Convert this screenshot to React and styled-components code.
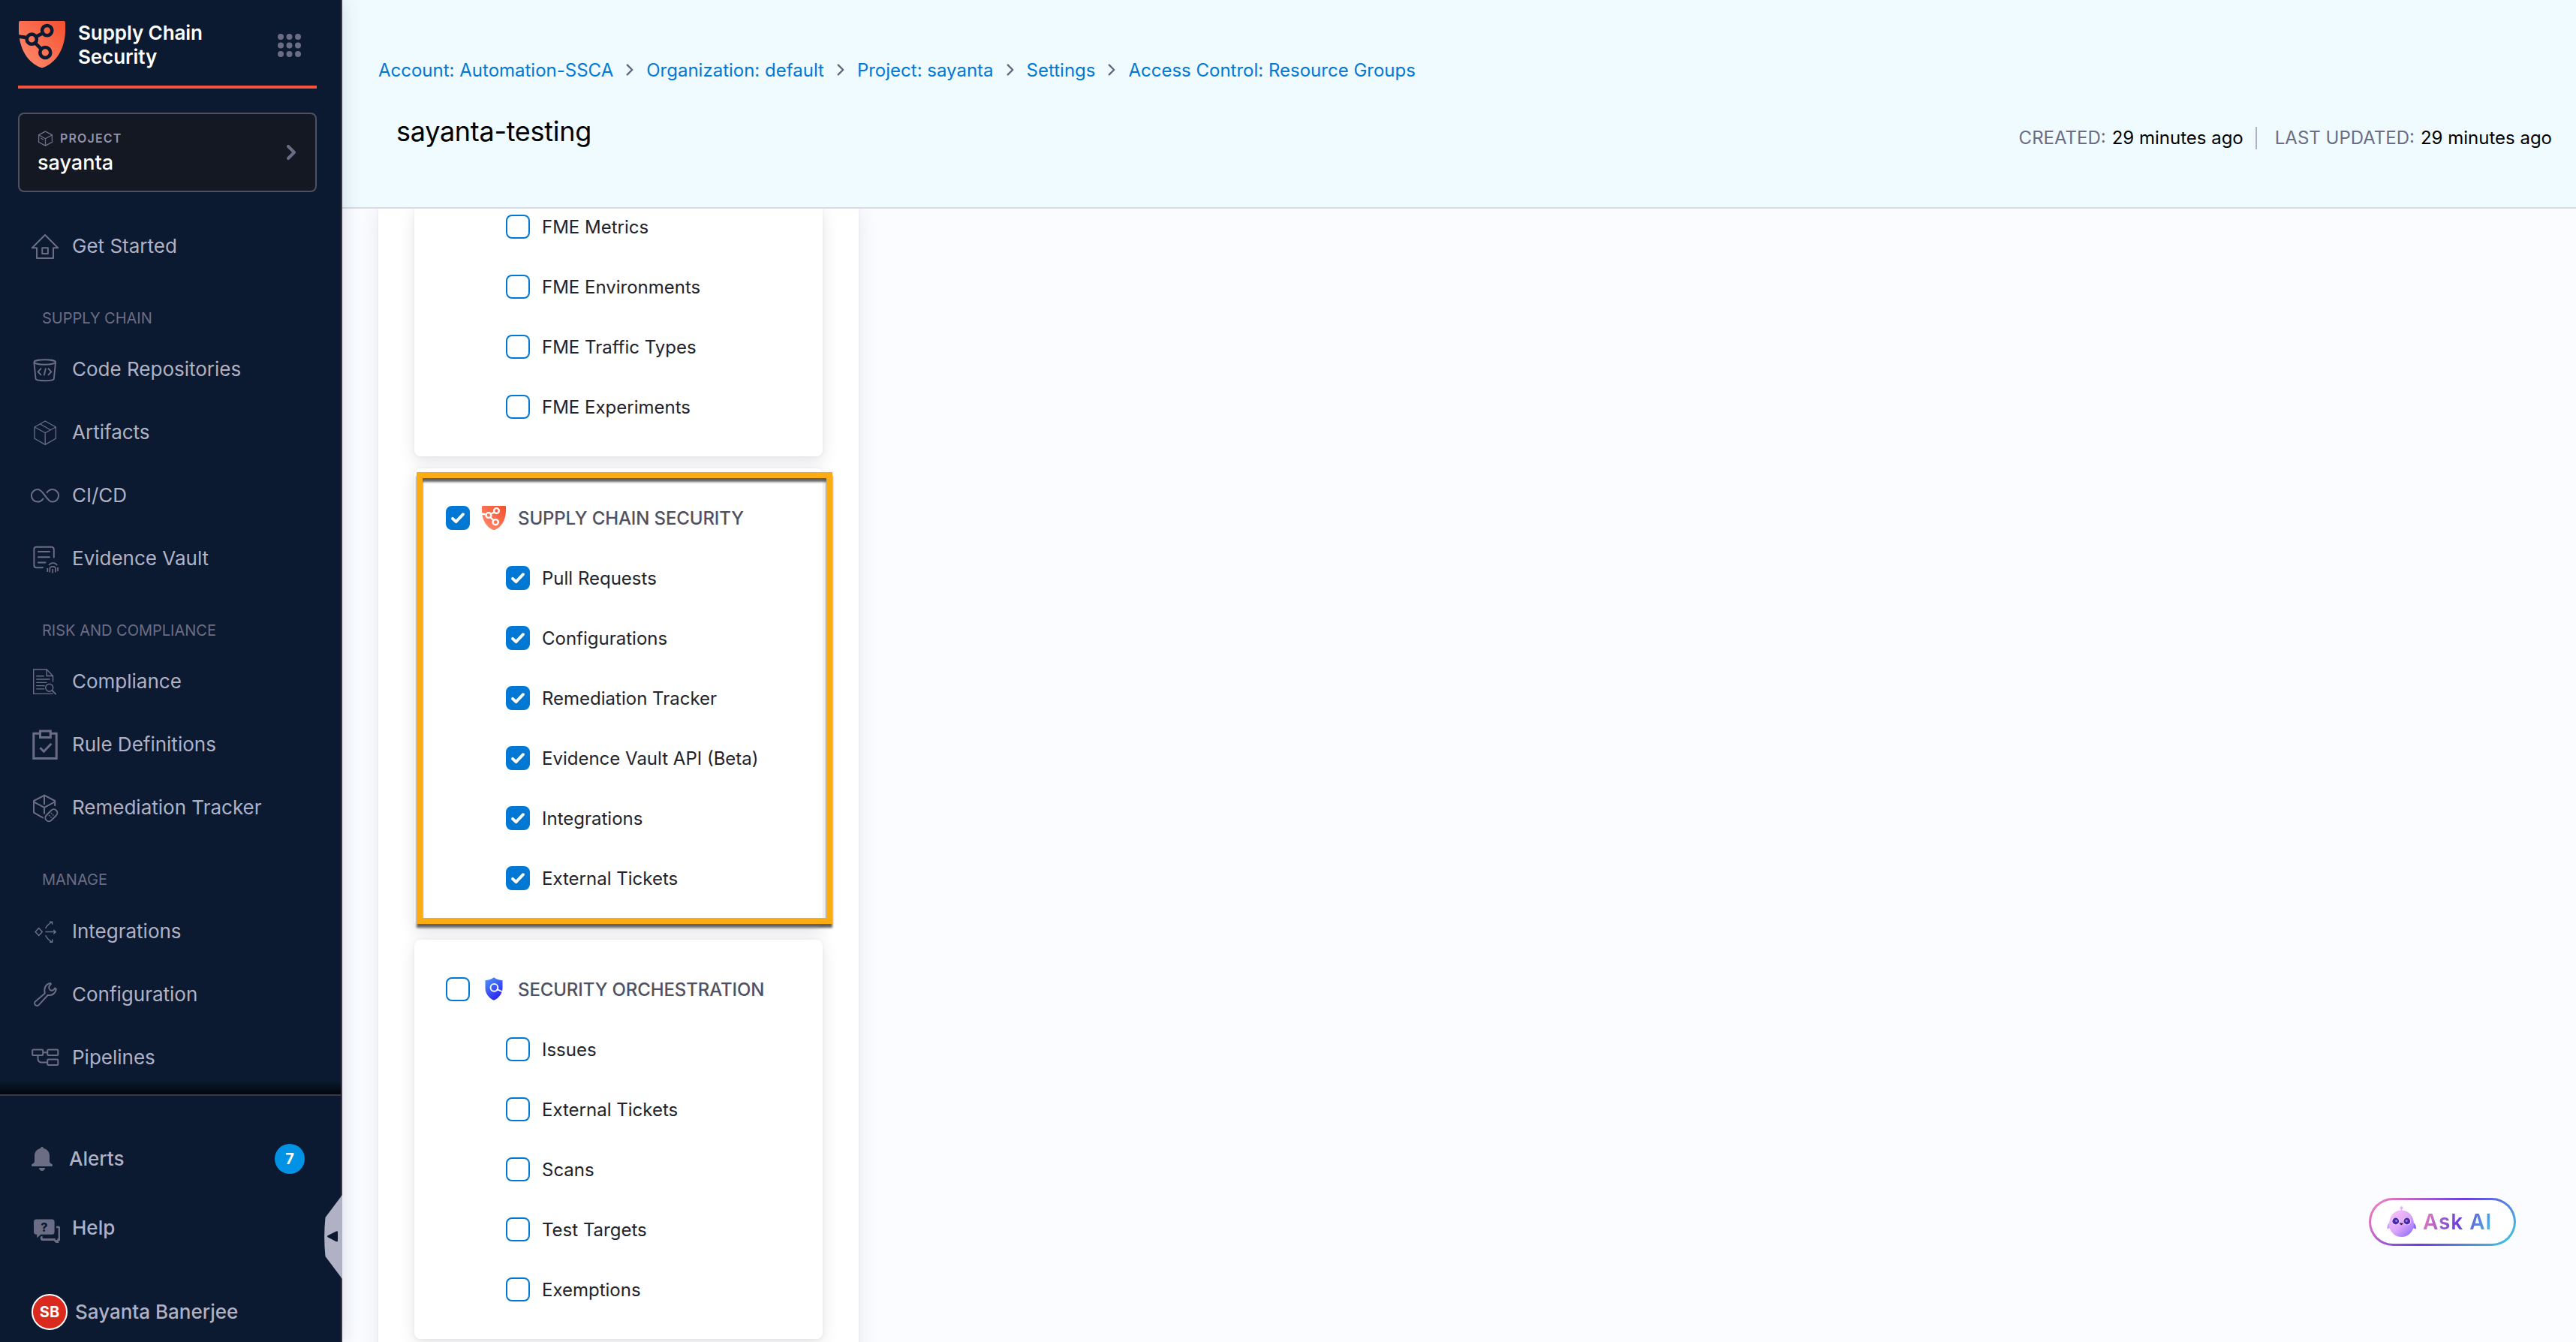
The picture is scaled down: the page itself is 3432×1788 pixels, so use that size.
import React from "react";
import styled, { createGlobalStyle, css } from "styled-components";

const navy = "#0b1a30";
const muted = "#6b6d85";
const soft = "#b0b1c4";
const blue = "#0278d5";

const GlobalStyle = createGlobalStyle`
  *, *::before, *::after { box-sizing: border-box; }
  html, body { margin: 0; padding: 0; }
  body {
    font-family: Inter, "Liberation Sans", sans-serif;
    font-size: 24px;
    background: #fafcff;
    overflow: hidden;
  }
  svg { display: block; flex: none; }
`;

const Shell = styled.div`
  display: grid;
  grid-template-columns: 456px 1fr;
  width: 100vw;
  height: 100vh;
  overflow: hidden;
`;

/* ---------- sidebar ---------- */

const Sidebar = styled.aside`
  position: relative;
  z-index: 2;
  display: flex;
  flex-direction: column;
  height: 100vh;
  background: ${navy};
  border-right: 2px solid #383946;
  box-shadow: 0 0 24px rgba(40, 50, 80, 0.16);
`;

const Brand = styled.header`
  display: flex;
  align-items: flex-start;
  height: 118px;
  margin: 0 32px 0 24px;
  padding: 28px 21px 0 1px;
  border-bottom: 4px solid #f7533a;
`;

const BrandName = styled.h1`
  flex: 1;
  width: 180px;
  margin: 0 0 0 17px;
  font-size: 26px;
  line-height: 32px;
  font-weight: 600;
  letter-spacing: -0.08px;
  color: #fff;
`;

const AppGrid = styled.svg`
  margin-top: 17px;
  fill: ${muted};
`;

const ProjectBox = styled.section`
  display: flex;
  align-items: center;
  justify-content: space-between;
  height: 106px;
  margin: 32px 32px 0 24px;
  padding: 0 26px 0 24px;
  background: #141822;
  border: 2px solid #4f5162;
  border-radius: 8px;
`;

const ProjectInfo = styled.div`
  display: flex;
  flex-direction: column;
  gap: 4px;
  padding-bottom: 2px;
`;

const ProjectTag = styled.div`
  display: flex;
  align-items: center;
  gap: 9px;
  height: 26px;
  font-size: 16px;
  font-weight: 600;
  letter-spacing: 1.15px;
  color: #9293ab;
`;

const ProjectName = styled.div`
  font-size: 27px;
  line-height: 32px;
  font-weight: 500;
  color: #fff;
`;

const Nav = styled.nav`
  flex: 1;
  min-height: 0;
  padding-top: 30px;
  background: linear-gradient(to top, #02060e 0, rgba(11, 26, 48, 0) 18px);
`;

const NavItem = styled.a`
  display: flex;
  align-items: center;
  gap: 16px;
  height: 84px;
  padding-left: 40px;
  font-size: 26px;
  color: ${soft};
`;

const RowText = styled.span`
  margin-top: ${(p) => (p.$drop ? 1 : -1)}px;
`;

const NavLabel = styled.div`
  height: ${(p) => p.$height || 80}px;
  padding: 42px 0 0 56px;
  font-size: 20px;
  line-height: 24px;
  color: ${muted};
`;

const Footer = styled.div`
  height: 330px;
  padding-top: 38px;
  border-top: 2px solid #383946;
`;

const FooterItem = styled.a`
  display: flex;
  align-items: center;
  gap: ${(p) => p.$gap}px;
  height: 92px;
  padding: 0 48px 0 ${(p) => p.$indent}px;
  font-size: 26px;
  font-weight: 500;
  color: ${soft};
`;

const Badge = styled.span`
  display: grid;
  place-items: center;
  width: 40px;
  height: 40px;
  margin-left: auto;
  border-radius: 50%;
  background: #0092e4;
  color: #fff;
  font-size: 20px;
  font-weight: 700;
`;

const UserRow = styled(FooterItem)`
  margin-top: 20px;
`;

const Avatar = styled.span`
  display: grid;
  place-items: center;
  width: 48px;
  height: 48px;
  border: 2px solid #fff;
  border-radius: 50%;
  background: #da291d;
  color: #fff;
  font-size: 20px;
  font-weight: 700;
`;

const CollapseHandle = styled.button`
  position: absolute;
  right: -2px;
  top: 1592px;
  width: 24px;
  height: 112px;
  padding: 0;
  border: 0;
  background: none;
`;

/* ---------- page ---------- */

const Main = styled.main`
  display: flex;
  flex-direction: column;
  min-width: 0;
  height: 100vh;
`;

const PageHeader = styled.header`
  flex: none;
  display: flex;
  flex-direction: column;
  height: 278px;
  padding: 75px 32px 0 48px;
  background: #effbff;
  border-bottom: 2px solid #d9dae5;
`;

const Crumbs = styled.nav`
  display: flex;
  align-items: center;
  gap: 17px;
  height: 36px;
  color: ${blue};
`;

const TitleRow = styled.div`
  display: flex;
  align-items: center;
  justify-content: space-between;
  margin-top: 40px;
  height: 48px;
`;

const Title = styled.h2`
  margin: 0 0 0 24px;
  font-size: 36px;
  line-height: 48px;
  font-weight: 400;
  letter-spacing: -0.28px;
  color: #000;
`;

const Meta = styled.dl`
  display: flex;
  align-items: center;
  margin: 17px 0 0;
`;

const MetaTerm = styled.dt`
  color: ${muted};
`;

const MetaValue = styled.dd`
  margin: 0 0 0 8px;
  color: #000;
`;

const MetaDivider = styled.span`
  width: 2px;
  height: 30px;
  margin: 0 24px 0 16px;
  background: ${soft};
`;

const Body = styled.div`
  flex: 1;
  min-height: 0;
  padding-left: 48px;
  overflow: hidden;
`;

const Panel = styled.section`
  display: flex;
  flex-direction: column;
  gap: 16px;
  width: 640px;
  padding: 0 48px;
  background: #fff;
  box-shadow: 0 0 4px rgba(40, 41, 61, 0.06), 0 4px 24px rgba(96, 97, 112, 0.13);
`;

const Card = styled.div`
  flex: none;
  position: relative;
  display: flex;
  flex-direction: column;
  justify-content: flex-end;
  height: ${(p) => p.$height}px;
  padding: 26px 0;
  border-radius: ${(p) => (p.$continued ? "0 0 8px 8px" : "8px")};
  background: #fff;
  box-shadow: 0 0 4px rgba(40, 41, 61, 0.06), 0 6px 20px rgba(96, 97, 112, 0.17);
`;

const Option = styled.label`
  flex: none;
  display: flex;
  align-items: center;
  gap: 16px;
  height: 80px;
  padding-left: ${(p) => (p.$group ? 42 : 122)}px;
  color: #22222a;
  ${(p) =>
    p.$group &&
    css`
      font-weight: 500;
      letter-spacing: -0.12px;
      color: #4f5162;
    `}
`;

const Box = styled.span`
  display: grid;
  place-items: center;
  width: 32px;
  height: 32px;
  border: 2px solid ${blue};
  border-radius: 8px;
  background: ${(p) => (p.$on ? blue : "#fff")};
`;

const Highlight = styled.div`
  position: absolute;
  left: 3px;
  top: 5px;
  width: 554px;
  height: 602px;
  border: 8px solid #fbac12;
  filter: drop-shadow(0 5px 1.5px rgba(0, 0, 0, 0.62));
  z-index: 1;
`;

const AskButton = styled.button`
  position: fixed;
  left: 3156px;
  top: 1596px;
  display: flex;
  align-items: center;
  gap: 8px;
  width: 196px;
  height: 64px;
  padding: 0 0 0 21px;
  border: 3px solid transparent;
  border-radius: 32px;
  background:
    linear-gradient(#fff, #fff) padding-box,
    linear-gradient(135deg, #ff84b8 0%, #6b3fdc 50%, #3bd0e2 100%) border-box;
`;

const AskLabel = styled.span`
  font: 600 28px/36px Inter, sans-serif;
  letter-spacing: 0.9px;
  background: linear-gradient(110deg, #ee7fba 0%, #6b3fdc 52%, #45c8e0 102%);
  background-clip: text;
  -webkit-background-clip: text;
  color: transparent;
`;

/* ---------- drawings ---------- */

const Line = ({ w = 2, children }) => (
  <svg width="40" height="40" viewBox="0 0 40 40" fill="none" stroke={muted} strokeWidth={w} strokeLinejoin="round">
    {children}
  </svg>
);

const icons = {
  home: (
    <Line>
      <path d="M20 5 2.8 22.2H9V36h22V22.2h6.2Z" />
      <path d="M16.3 22.3h7.6v7.8h-7.6z" />
    </Line>
  ),
  repo: (
    <Line w={1.9}>
      <ellipse cx="19.7" cy="10.5" rx="14.3" ry="3.2" />
      <path d="M5.4 11 7.6 33c1.5 3 22.6 3 24.2 0L34 11" />
      <path d="m15 18.7-4.4 4.6 4.4 4.6M24 18.7l4.4 4.6-4.4 4.6M21 18.4l-2.4 9.8" />
    </Line>
  ),
  box: (
    <Line w={1.3}>
      <path d="m20.2 5 14.2 8v15.2l-14.2 8.2-14.2-8.2V13Z" />
      <path d="m6 13 14.2 7.8L34.4 13M20.2 20.8v15.4M13.3 8.8 27 16.8" />
    </Line>
  ),
  loop: (
    <Line>
      <path
        strokeLinecap="round"
        d="M17.4 24.6C15.6 27.1 13.4 28.6 10.2 28.6a8.3 8.3 0 0 1 0-16.6C18 12 22 28.6 29.8 28.6a8.3 8.3 0 0 0 0-16.6c-3.2 0-5.4 1.6-7.2 4.1"
      />
    </Line>
  ),
  vault: (
    <Line>
      <g strokeLinecap="round">
        <path d="M17 32.2H8.4a3 3 0 0 1-3-3V7.8a3 3 0 0 1 3-3h20.4a3 3 0 0 1 3 3v10.8" />
        <path d="M11 11h15M11 18.3h15M11 25.6h9.5" />
      </g>
      <g strokeWidth="1.7">
        <path d="M23.3 38v-5M25 29c3-4 8.6-4 11 0M37 32v5M26.3 38.6v-4.8c0-4 7.8-4 7.8 0v4.8M30.2 34v5.4" />
      </g>
    </Line>
  ),
  compliance: (
    <Line w={1.4}>
      <path strokeLinejoin="miter" d="M30.5 20.5v-8L22.2 4H4.7v32.4h26M22.2 4v8.5h8.3" />
      <path d="M8.3 12.8h10.4M8.3 17h18.4M8.3 21.4h14M8.3 25.6h11.5M8.3 29.9h11" />
      <circle cx="25.7" cy="28.2" r="5" />
      <path d="m29.3 31.8 5.4 5.4" strokeWidth="1.8" />
    </Line>
  ),
  rule: (
    <Line w={3}>
      <g strokeLinejoin="miter">
        <path d="M13.5 5.2H4.8v33.3h30.4V5.2h-8.7" />
        <path d="M13.5 2h13.8v8.5H13.5z" />
        <path d="m13.4 24.2 5 5 10-10.4" />
      </g>
    </Line>
  ),
  remediation: (
    <Line w={2}>
      <path d="M33.2 18v-7L19.2 3.6 5 11v15.6l12.8 7.2M5 12.4l14 7.4 14-7.4M19 4v12M19 19.8v8.8" />
      <g transform="rotate(-45 28.3 30.2)">
        <rect x="19" y="25.6" width="18.6" height="9.4" rx="4.7" />
        <path d="M25.4 28.8h1.6M29.4 28.8H31M25.4 31.8h1.6M29.4 31.8H31" strokeWidth="1.6" />
      </g>
    </Line>
  ),
  integrations: (
    <Line w={1.5}>
      <path d="m11.7 15.6 4.6 5-4.6 5-4.6-5Z" />
      <path d="M20.4 20.6h13.8M31.2 18l3 2.6-3 2.6M20.6 16c1.8-4 4.8-6.4 8.8-8.6M26 7.2h3.6v3.6M20.6 25.2c1.8 4 4.8 6.6 8.8 8.9M26 34.2h3.8v-3.6" />
    </Line>
  ),
  wrench: (
    <Line>
      <path d="M19.8 18.4 6.9 29.4a3.3 3.3 0 1 0 4.9 4.5L23.8 20.8c5.2 1.2 10.4-2.2 11-8.3l-1.6-1c-1.5 3.2-4.4 4.2-6.6 2.2-2.3-2.2-1.8-5 1.3-7.4l-.6-1.4c-6.6.7-9.2 6.9-7.5 13.5Z" />
    </Line>
  ),
  pipelines: (
    <Line>
      <rect x="3.2" y="9.6" width="14" height="7.4" rx="1" />
      <rect x="23.3" y="9.6" width="14" height="7.4" rx="1" />
      <rect x="23.3" y="22.6" width="14" height="7.4" rx="1" />
      <path d="M17.2 13.3h6M10.5 17v4.6c0 3 1.6 4.8 4.6 4.8h8.2" />
    </Line>
  ),
  help: (
    <svg width="40" height="40" viewBox="0 0 40 40">
      <path
        fill={muted}
        d="M8.5 8.6h20.6a3.5 3.5 0 0 1 3.5 3.5v13.2a3.5 3.5 0 0 1-3.5 3.5H14.4L9.2 33.6V28.8h-.7a3.5 3.5 0 0 1-3.5-3.5V12.1a3.5 3.5 0 0 1 3.5-3.5Z"
      />
      <path
        fill={muted}
        d="M35 17.6h3a2 2 0 0 1 2 2V37h-1.7v3.3h-3.6L31.5 37H16.8a3 3 0 0 1-3-3v-2.2l2.8-1v2.4a.8.8 0 0 0 .8.8H33.8v2h2.4l.4-2h1V20.2H35Z"
      />
      <text x="18.8" y="24.6" textAnchor="middle" fontFamily="Inter" fontSize="16" fontWeight="800" fill={navy}>
        ?
      </text>
    </svg>
  ),
  bell: (
    <svg width="28" height="32" viewBox="0 0 28 32" fill={muted}>
      <path d="M14 0c1.3 0 2 .8 2 2.1C21 3.2 24 7 24 12v6.5c0 2 .6 3 2.4 4.1.9.5 1.6 1 1.6 1.9 0 1-.8 1.5-1.9 1.5H1.9C.8 26 0 25.5 0 24.5c0-.9.7-1.4 1.6-1.9C3.4 21.5 4 20.5 4 18.5V12C4 7 7 3.2 12 2.1 12 .8 12.7 0 14 0ZM10 28h8c0 2.2-1.8 4-4 4s-4-1.800-4-4Z" />
    </svg>
  ),
};

const ShieldLogo = ({ size, cut, id }) => (
  <svg width={size} height={size * 1.01} viewBox="0 0 62 63" preserveAspectRatio="none">
    <defs>
      <linearGradient id={id} x1="0" y1="1" x2="1" y2="0">
        <stop offset="0.2" stopColor="#ff8266" />
        <stop offset="1" stopColor="#f3502c" />
      </linearGradient>
    </defs>
    <path
      fill={`url(#${id})`}
      d="M2 0h58a2 2 0 0 1 2 2v12C61 38 50 55.5 32.5 62.5q-1.5.7-3 0C12 55.5 1 38 0 14V2a2 2 0 0 1 2-2Z"
    />
    <g fill="none" stroke={cut} strokeWidth="4.6">
      <circle cx="37.7" cy="12.7" r="6.6" />
      <circle cx="17.3" cy="24.3" r="6.6" />
      <circle cx="35.3" cy="42.3" r="7" />
      <path d="m23 21 9-4.6M22 29.5l8.5 8.5" />
    </g>
    <path fill={cut} d="M0 18.3 9.5 19.5l-.5 5-9-1.3Z" />
  </svg>
);

const SearchShield = () => (
  <svg width="32" height="32" viewBox="0 0 32 32">
    <defs>
      <linearGradient id="stoFill" x1="0.2" y1="0" x2="0.8" y2="1">
        <stop offset="0" stopColor="#4a8dfa" />
        <stop offset="1" stopColor="#2a1cf0" />
      </linearGradient>
    </defs>
    <path
      fill="url(#stoFill)"
      d="M16 -1c3 2.400 7 4 11.500 4.500v11C27.500 22.500 23 29.500 16 32.800 9 29.500 4.500 22.500 4.500 14.500v-11C9 3 13 1.400 16-1Z"
      transform="translate(0 1.200) scale(1 0.900)"
    />
    <circle cx="16.4" cy="13.800" r="4.9" fill="none" stroke="#fff" strokeWidth="1.9" />
    <path d="m19.6 15.800 7.2 3.2" stroke="#fff" strokeWidth="1.9" />
  </svg>
);

const Chevron = ({ w, h, stroke, sw }) => (
  <svg
    width={w}
    height={h}
    viewBox="0 0 12 20"
    fill="none"
    stroke={stroke}
    strokeWidth={sw}
    strokeLinecap="round"
    strokeLinejoin="round"
  >
    <path d="m2 2 8 8-8 8" />
  </svg>
);

const Check = () => (
  <svg
    width="28"
    height="28"
    viewBox="0 0 28 28"
    fill="none"
    stroke="#fff"
    strokeWidth="3.9"
    strokeLinecap="round"
    strokeLinejoin="round"
  >
    <path d="m7 14.8 4.5 4.4L21 9.2" />
  </svg>
);

const Robot = () => (
  <svg width="40" height="42" viewBox="0 0 40 42">
    <defs>
      <linearGradient id="botBody" x1="0.15" y1="0.1" x2="0.9" y2="0.95">
        <stop offset="0" stopColor="#f7bcfb" />
        <stop offset="0.5" stopColor="#dda6fa" />
        <stop offset="1" stopColor="#8f6ffa" />
      </linearGradient>
    </defs>
    <circle cx="19.5" cy="2.2" r="2" fill="#e9b5f7" />
    <path d="M19.5 3v5" stroke="#e0aef5" strokeWidth="1.6" />
    <path d="M4 22c-2.500 1-4 4-3.700 8.500L5 29Z" fill="#d0a0f8" />
    <path d="M35 22c2.500 1 4.300 4 4 8.500L34 29Z" fill="#8d6cf8" />
    <path
      d="M19.5 5.500C30 5.500 36 14 36 24c0 9.500-7 17-16.500 17S3 33.500 3 24C3 14 9 5.500 19.500 5.500Z"
      fill="url(#botBody)"
    />
    <circle cx="11.8" cy="20" r="5.3" fill="#f3d9ff" />
    <circle cx="26.8" cy="20" r="5.3" fill="#f3d9ff" />
    <circle cx="11.8" cy="20" r="4.4" fill="#4b2aa8" />
    <circle cx="26.8" cy="20" r="4.4" fill="#4b2aa8" />
    <circle cx="12.6" cy="19.6" r="1.4" fill="#a98af0" />
    <circle cx="26.2" cy="19.6" r="1.4" fill="#a98af0" />
    <path d="M16.3 22.500h6l-3 3Z" fill="#35205e" />
  </svg>
);

/* ---------- data ---------- */

const navGroups = [
  { items: [["home", "Get Started"]] },
  {
    label: "SUPPLY CHAIN",
    items: [
      ["repo", "Code Repositories"],
      ["box", "Artifacts"],
      ["loop", "CI/CD"],
      ["vault", "Evidence Vault"],
    ],
  },
  {
    label: "RISK AND COMPLIANCE",
    items: [
      ["compliance", "Compliance"],
      ["rule", "Rule Definitions"],
      ["remediation", "Remediation Tracker"],
    ],
  },
  {
    label: "MANAGE",
    labelHeight: 81,
    items: [
      ["integrations", "Integrations"],
      ["wrench", "Configuration"],
      ["pipelines", "Pipelines"],
    ],
  },
];

const crumbs = [
  "Account: Automation-SSCA",
  "Organization: default",
  "Project: sayanta",
  "Settings",
  "Access Control: Resource Groups",
];

const cards = [
  {
    height: 330,
    continued: true,
    options: ["FME Metrics", "FME Environments", "FME Traffic Types", "FME Experiments"],
  },
  {
    height: 612,
    title: "SUPPLY CHAIN SECURITY",
    icon: <ShieldLogo size={32} cut="#fff" id="scsSmall" />,
    checked: true,
    options: [
      "Pull Requests",
      "Configurations",
      "Remediation Tracker",
      "Evidence Vault API (Beta)",
      "Integrations",
      "External Tickets",
    ],
  },
  {
    height: 532,
    title: "SECURITY ORCHESTRATION",
    icon: <SearchShield />,
    options: ["Issues", "External Tickets", "Scans", "Test Targets", "Exemptions"],
  },
  { height: 80, options: [] },
];

const dots = [4, 15.5, 27];

export default function App() {
  return (
    <>
      <GlobalStyle />
      <Shell>
        <Sidebar>
          <Brand>
            <ShieldLogo size={62} cut={navy} id="scsLarge" />
            <BrandName>
              Supply Chain
              <br />
              Security
            </BrandName>
            <AppGrid width="31" height="31" viewBox="0 0 31 31">
              {dots.map((y) => dots.map((x) => <circle key={`${x}-${y}`} cx={x} cy={y} r="4" />))}
            </AppGrid>
          </Brand>
          <ProjectBox>
            <ProjectInfo>
              <ProjectTag>
                <svg width="21" height="21" viewBox="0 0 40 40" fill="none" stroke={muted} strokeWidth="2.6">
                  <path d="m20 2 17 9v18l-17 9.500L3 29V11ZM3 11l17 9.500L37 11M20 20.500V38M8 19l7 4" />
                </svg>
                PROJECT
              </ProjectTag>
              <ProjectName>sayanta</ProjectName>
            </ProjectInfo>
            <Chevron w={12} h={20} stroke={muted} sw={4} />
          </ProjectBox>
          <Nav>
            {navGroups.map((group) => (
              <React.Fragment key={group.label || "top"}>
                {group.label && <NavLabel $height={group.labelHeight}>{group.label}</NavLabel>}
                {group.items.map(([icon, text]) => (
                  <NavItem key={text}>
                    {icons[icon]}
                    <RowText>{text}</RowText>
                  </NavItem>
                ))}
              </React.Fragment>
            ))}
          </Nav>
          <Footer>
            <FooterItem $indent={42} $gap={22}>
              {icons.bell}
              <RowText>Alerts</RowText>
              <Badge>7</Badge>
            </FooterItem>
            <FooterItem $indent={40} $gap={16}>
              {icons.help}
              <RowText>Help</RowText>
            </FooterItem>
            <UserRow $indent={42} $gap={10}>
              <Avatar>SB</Avatar>
              <RowText>Sayanta Banerjee</RowText>
            </UserRow>
          </Footer>
          <CollapseHandle aria-label="Collapse">
            <svg width="24" height="112" viewBox="0 0 24 112">
              <path fill={soft} d="M24 0v112L1.500 82C-.3 65-.3 47 1.500 30Z" />
              <path
                fill={navy}
                d="M4.500 54.200 15.500 48.700q2.500-1 2.500 1v11.200q0 2.200-2.500 1L4.500 56.200q-1.200-1 0-2Z"
              />
            </svg>
          </CollapseHandle>
        </Sidebar>

        <Main>
          <PageHeader>
            <Crumbs>
              {crumbs.map((text, i) => (
                <React.Fragment key={text}>
                  {i > 0 && <Chevron w={10} h={16} stroke="#5c6b7d" sw={3} />}
                  <RowText $drop>{text}</RowText>
                </React.Fragment>
              ))}
            </Crumbs>
            <TitleRow>
              <Title>sayanta-testing</Title>
              <Meta>
                <MetaTerm>CREATED:</MetaTerm>
                <MetaValue>29 minutes ago</MetaValue>
                <MetaDivider />
                <MetaTerm>LAST UPDATED:</MetaTerm>
                <MetaValue>29 minutes ago</MetaValue>
              </Meta>
            </TitleRow>
          </PageHeader>
          <Body>
            <Panel>
              {cards.map((card, i) => (
                <Card key={i} $height={card.height} $continued={card.continued}>
                  {card.title && (
                    <Option $group>
                      <Box $on={card.checked}>{card.checked && <Check />}</Box>
                      {card.icon}
                      <RowText $drop>{card.title}</RowText>
                    </Option>
                  )}
                  {card.options.map((text) => (
                    <Option key={text}>
                      <Box $on={card.checked}>{card.checked && <Check />}</Box>
                      <RowText $drop>{text}</RowText>
                    </Option>
                  ))}
                  {card.checked && <Highlight />}
                </Card>
              ))}
            </Panel>
          </Body>
        </Main>
      </Shell>
      <AskButton>
        <Robot />
        <AskLabel>Ask AI</AskLabel>
      </AskButton>
    </>
  );
}
